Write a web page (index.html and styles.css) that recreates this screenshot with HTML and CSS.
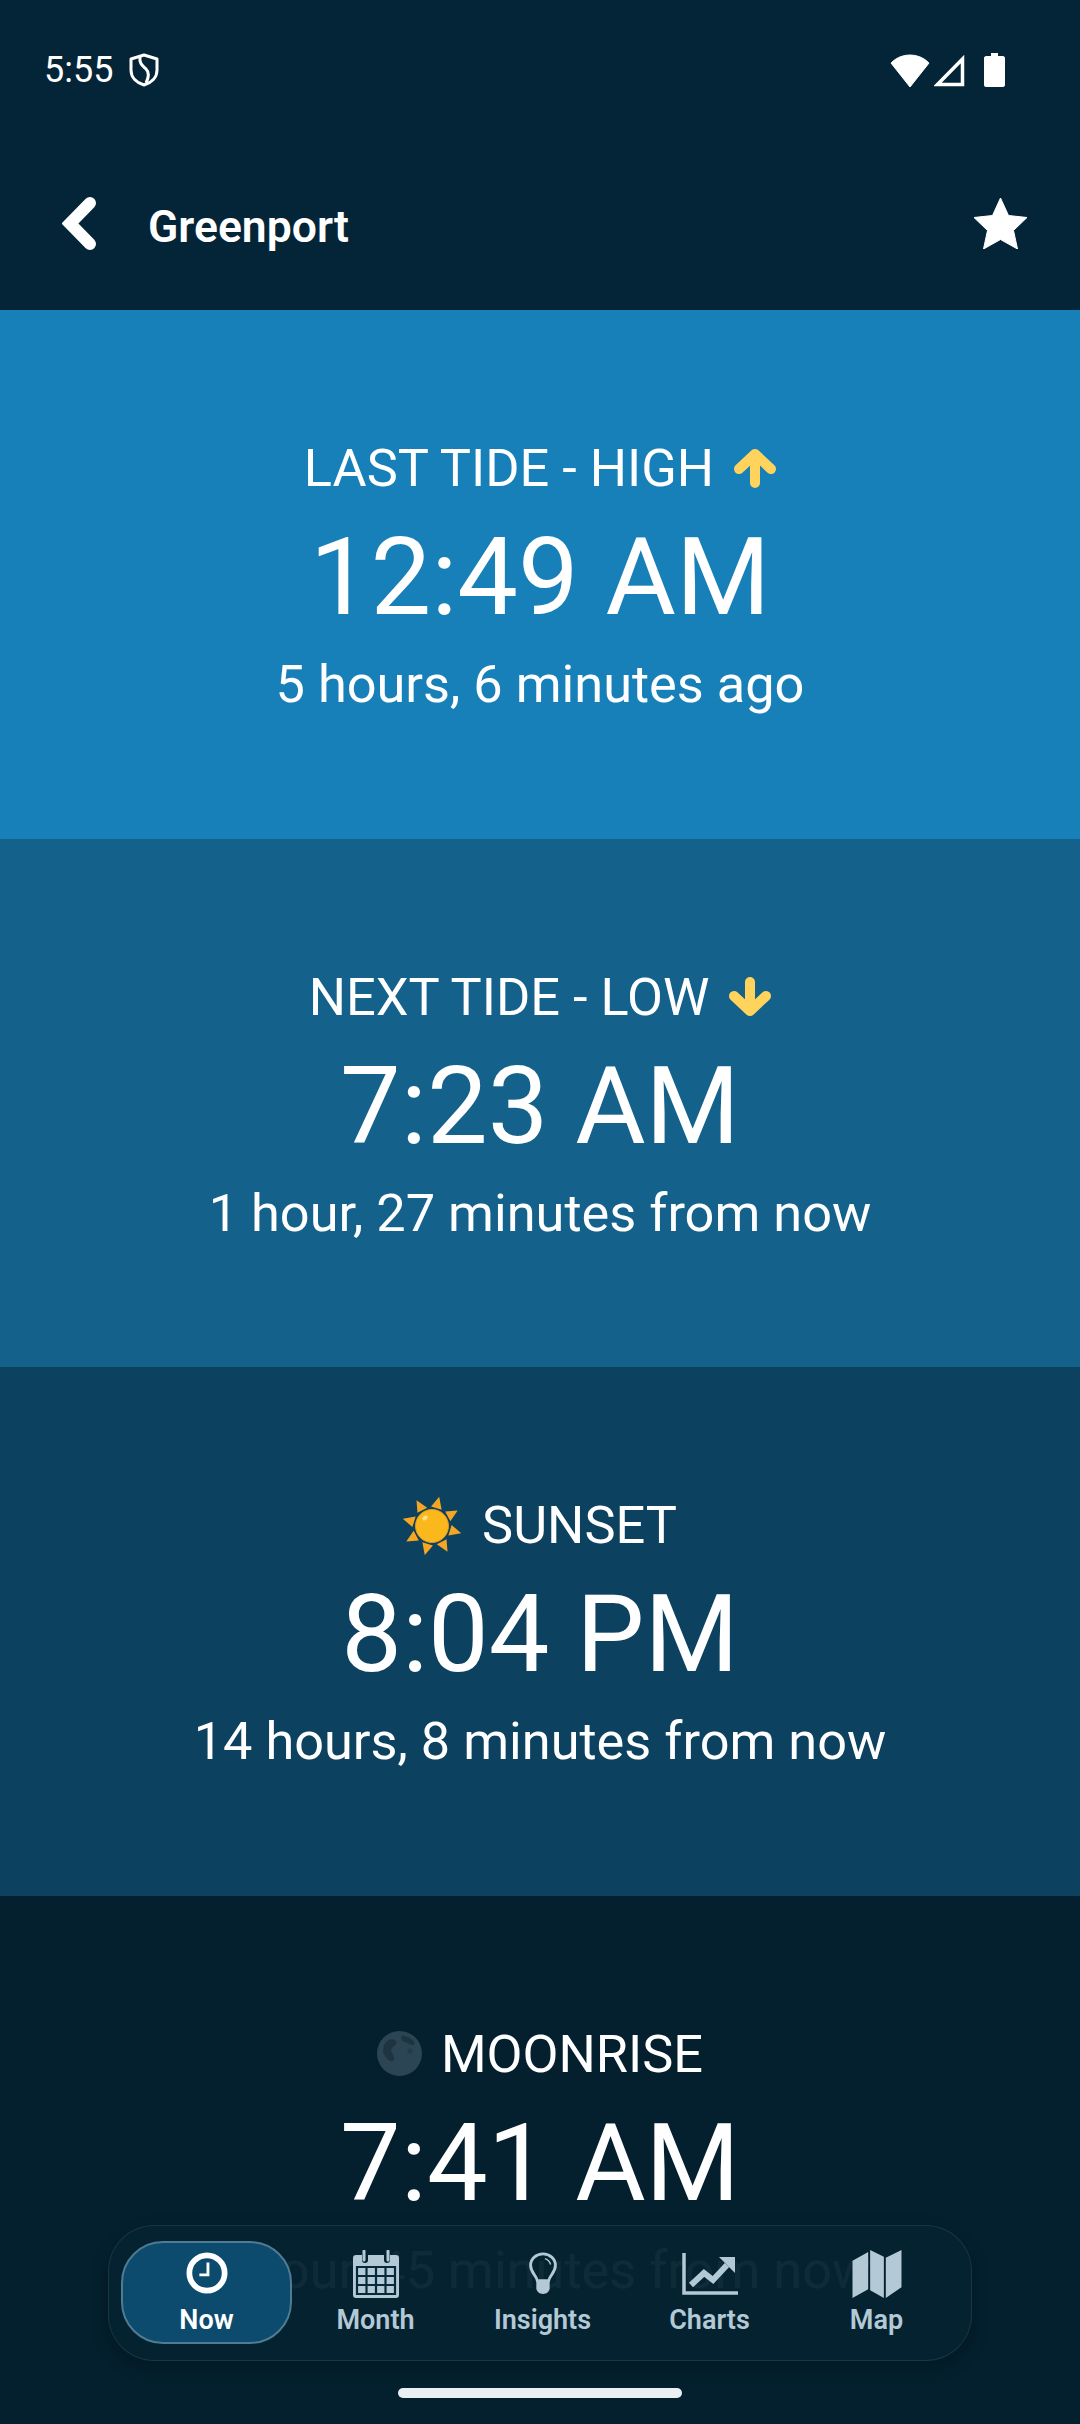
FILE: index.html
```html
<!DOCTYPE html>
<html lang="en">
<head>
    <meta charset="UTF-8">
    <meta name="viewport" content="width=device-width, initial-scale=1.0">
    <title>Greenport Tides</title>
    <link rel="stylesheet" href="styles.css">
</head>
<body>
    <div class="screen">
        <header class="top">
            <div class="status">
                <div class="status-left">
                    <span class="clock">5:55</span>
                    <svg class="shield" viewBox="0 0 30 34"><path d="M15 2 L28 6 V17 C28 25 22 30 15 32 C8 30 2 25 2 17 V6 Z" fill="none" stroke="#fff" stroke-width="3" stroke-linejoin="round"/><path d="M11 4 C10 11 14 13 17 16 C20 19 20 24 17 30" fill="none" stroke="#fff" stroke-width="3"/></svg>
                </div>
                <div class="status-right">
                    <svg class="wifi" viewBox="0 0 40 33"><path d="M20 33 L1 9 C1 9 8 1 20 1 C32 1 39 9 39 9 Z" fill="#fff" stroke="#fff" stroke-width="1" stroke-linejoin="round"/></svg>
                    <svg class="signal" viewBox="0 0 31 33"><path d="M28.5 5 V30.5 H3.5 Z" fill="none" stroke="#fff" stroke-width="3.5"/></svg>
                    <svg class="battery" viewBox="0 0 21 34"><path d="M7 0 H14 V3 H19 C20 3 21 4 21 5 V32 C21 33 20 34 19 34 H2 C1 34 0 33 0 32 V5 C0 4 1 3 2 3 H7 Z" fill="#fff"/></svg>
                </div>
            </div>
            <div class="titlebar">
                <svg class="back" viewBox="0 0 35 53"><path d="M28 6 L8 26.5 L28 47" fill="none" stroke="#fff" stroke-width="12" stroke-linecap="round" stroke-linejoin="miter"/></svg>
                <h1>Greenport</h1>
                <svg class="star" viewBox="0 0 55 52"><path d="M27.5 1 L35.5 18.5 L54 20.5 L40.5 33.5 L44.5 52 L27.5 42.5 L10.5 52 L14.5 33.5 L1 20.5 L19.5 18.5 Z" fill="#fff" stroke="#fff" stroke-width="1" stroke-linejoin="round"/></svg>
            </div>
        </header>

        <section class="tile tile-last">
            <div class="label">LAST TIDE - HIGH
                <svg class="arrow" viewBox="0 0 42 39"><path d="M21 34 V5 M5 20 L21 5 L37 20" fill="none" stroke="#ffd35c" stroke-width="10" stroke-linecap="round" stroke-linejoin="round"/></svg>
            </div>
            <div class="time">12:49 AM</div>
            <div class="since">5 hours, 6 minutes ago</div>
        </section>

        <section class="tile tile-next">
            <div class="label">NEXT TIDE - LOW
                <svg class="arrow" viewBox="0 0 42 39"><path d="M21 5 V34 M5 19 L21 34 L37 19" fill="none" stroke="#ffd35c" stroke-width="10" stroke-linecap="round" stroke-linejoin="round"/></svg>
            </div>
            <div class="time">7:23 AM</div>
            <div class="since">1 hour, 27 minutes from now</div>
        </section>

        <section class="tile tile-sun">
            <div class="label">
                <svg class="sun" viewBox="0 0 58 59">
                    <g fill="#f5a623">
                        <path d="M30 0 L35 12 L24 11 Z" transform="rotate(12 29 30)"/>
                        <path d="M30 0 L35 12 L24 11 Z" transform="rotate(57 29 30)"/>
                        <path d="M30 0 L35 12 L24 11 Z" transform="rotate(102 29 30)"/>
                        <path d="M30 0 L35 12 L24 11 Z" transform="rotate(147 29 30)"/>
                        <path d="M30 0 L35 12 L24 11 Z" transform="rotate(192 29 30)"/>
                        <path d="M30 0 L35 12 L24 11 Z" transform="rotate(237 29 30)"/>
                        <path d="M30 0 L35 12 L24 11 Z" transform="rotate(282 29 30)"/>
                        <path d="M30 0 L35 12 L24 11 Z" transform="rotate(327 29 30)"/>
                    </g>
                    <circle cx="29" cy="30" r="16.5" fill="#fbb81c" stroke="#e8991a" stroke-width="1"/>
                    <ellipse cx="22" cy="22" rx="3" ry="2" fill="#fde08a" transform="rotate(-40 22 22)"/>
                </svg>
                SUNSET
            </div>
            <div class="time">8:04 PM</div>
            <div class="since">14 hours, 8 minutes from now</div>
        </section>

        <section class="tile tile-moon">
            <div class="label">
                <svg class="moon" viewBox="0 0 45 45">
                    <circle cx="22.5" cy="22.5" r="22.5" fill="#2b4554"/>
                    <path d="M7 14 C10 8 16 7 19 10 C21 14 15 15 14 19 C15 24 19 26 16 30 C12 31 8 26 6 21 Z" fill="#1f3441"/>
                    <path d="M24 5 C30 4 36 8 38 13 C34 16 31 11 25 10 Z" fill="#1f3441"/>
                    <circle cx="33" cy="20" r="2.5" fill="#243b49"/>
                </svg>
                MOONRISE
            </div>
            <div class="time">7:41 AM</div>
            <div class="since">1 hour, 45 minutes from now</div>
        </section>

        <nav class="tabs">
            <a class="tab active">
                <svg class="tab-icon tab-icon-small" viewBox="0 0 44 44"><circle cx="22" cy="22" r="18.5" fill="none" stroke="#fff" stroke-width="6"/><path d="M23 11 V24 H14" fill="none" stroke="#fff" stroke-width="3"/></svg>
                <span>Now</span>
            </a>
            <a class="tab">
                <svg class="tab-icon" viewBox="0 0 46 48"><path d="M3 5 H9 V10 A3 3 0 0 0 15 10 V5 H31 V10 A3 3 0 0 0 37 10 V5 H43 A3 3 0 0 1 46 8 V45 A3 3 0 0 1 43 48 H3 A3 3 0 0 1 0 45 V8 A3 3 0 0 1 3 5 Z" fill="#b3c9d5"/><path d="M11 1 V10 M35 1 V10" stroke="#b3c9d5" stroke-width="3" stroke-linecap="round"/><path d="M4 17 H42 V44 H4 Z M4 26 H42 M4 35 H42 M13.5 17 V44 M23 17 V44 M32.5 17 V44" fill="none" stroke="#06293c" stroke-width="2.2"/></svg>
                <span>Month</span>
            </a>
            <a class="tab">
                <svg class="tab-icon tab-icon-small" viewBox="0 0 30 44"><path d="M9 30 C8 24 2 22 2 14 C2 7 8 2 15 2 C22 2 28 7 28 14 C28 22 22 24 21 30 Z" fill="none" stroke="#b3c9d5" stroke-width="3"/><path d="M8 30 H22 V38 C22 41 19 44 15 44 C11 44 8 41 8 38 Z" fill="#b3c9d5"/><path d="M17 7 C20 8 22 10 23 13" fill="none" stroke="#b3c9d5" stroke-width="1.5"/></svg>
                <span>Insights</span>
            </a>
            <a class="tab">
                <svg class="tab-icon" viewBox="0 0 56 42"><path d="M2 0 V40 H56" fill="none" stroke="#b3c9d5" stroke-width="3.5"/><path d="M9 32 L22 20 L31 27 L45 12" fill="none" stroke="#b3c9d5" stroke-width="6"/><path d="M37 4 H53 V20 Z" fill="#b3c9d5"/></svg>
                <span>Charts</span>
            </a>
            <a class="tab">
                <svg class="tab-icon" viewBox="0 0 50 49"><path d="M0 11 L16 2 V40 L0 49 Z M18 0 L32 7 V49 L18 41 Z M34 8 L50 0 V38 L34 49 Z" fill="#b3c9d5"/></svg>
                <span>Map</span>
            </a>
        </nav>
        <div class="home-bar"></div>
    </div>
</body>
</html>
```

FILE: styles.css
```css
html, body {
    margin: 0;
    padding: 0;
    background: #041f2e;
}
.screen {
    position: relative;
    width: 1080px;
    height: 2424px;
    overflow: hidden;
    font-family: Roboto, "Noto Sans", sans-serif;
    color: #fff;
}
.top {
    height: 310px;
    background: #042537;
    display: flex;
    flex-direction: column;
}
.status {
    height: 140px;
    padding: 0 75px 0 44px;
    display: flex;
    justify-content: space-between;
    align-items: center;
    box-sizing: border-box;
}
.status-left, .status-right {
    display: flex;
    align-items: center;
}
.clock {
    font-size: 36px;
    line-height: 40px;
}
.shield {
    width: 30px;
    height: 34px;
    margin-left: 16px;
}
.wifi {
    width: 40px;
    height: 33px;
}
.signal {
    width: 31px;
    height: 33px;
    margin-left: 4px;
}
.battery {
    width: 21px;
    height: 34px;
    margin-left: 19px;
}
.titlebar {
    flex: 1;
    display: flex;
    align-items: center;
    padding: 4px 52px 0 62px;
}
.back {
    width: 35px;
    height: 53px;
    margin-bottom: 8px;
}
.titlebar h1 {
    flex: 1;
    margin: 0 0 0 51px;
    font-size: 44.5px;
    font-weight: 600;
}
.star {
    width: 55px;
    height: 52px;
    margin-bottom: 8px;
}
.tile {
    height: 528.5px;
    box-sizing: border-box;
    padding-top: 6px;
    display: flex;
    flex-direction: column;
    align-items: center;
    justify-content: center;
}
.tile-last { background: #1880b8; }
.tile-next { background: #14618c; }
.tile-sun { background: #0c415f; }
.tile-moon { background: #041f2e; }
.label {
    display: flex;
    align-items: center;
    margin-top: -2px;
    margin-bottom: 2px;
    font-size: 52.3px;
    line-height: 60px;
}
.time {
    font-size: 108px;
    line-height: 154px;
}
.since {
    font-size: 52.3px;
    line-height: 60px;
}
.arrow {
    width: 42px;
    height: 39px;
    margin-left: 20px;
}
.sun {
    width: 58px;
    height: 59px;
    margin-right: 21px;
}
.moon {
    width: 45px;
    height: 45px;
    margin-right: 19px;
}
.tabs {
    position: absolute;
    left: 108px;
    top: 2225px;
    width: 864px;
    height: 136px;
    box-sizing: border-box;
    padding: 15px 11px 16px 12px;
    display: flex;
    background: rgba(5, 34, 50, 0.96);
    border: 1px solid rgba(60, 90, 105, 0.35);
    border-radius: 46px;
    box-shadow: 0 6px 18px rgba(0, 0, 0, 0.2);
}
.tab {
    flex: 1;
    display: flex;
    flex-direction: column;
    align-items: center;
    justify-content: space-between;
    padding: 7px 0 7px;
    box-sizing: border-box;
    color: #b3c9d5;
    font-size: 27px;
    font-weight: 600;
    line-height: 30px;
    border: 2px solid transparent;
    border-radius: 42px;
}
.tab.active {
    flex: none;
    width: 171px;
    color: #fff;
    background: #0d4b6e;
    border-color: #4f7b93;
}
.tab-icon {
    height: 48px;
    width: 56px;
}
.tab-icon-small {
    height: 42px;
    margin: 2px 0 4px;
}
.home-bar {
    position: absolute;
    left: 398px;
    top: 2388px;
    width: 284px;
    height: 10px;
    border-radius: 5px;
    background: #eaf0f2;
}
```
